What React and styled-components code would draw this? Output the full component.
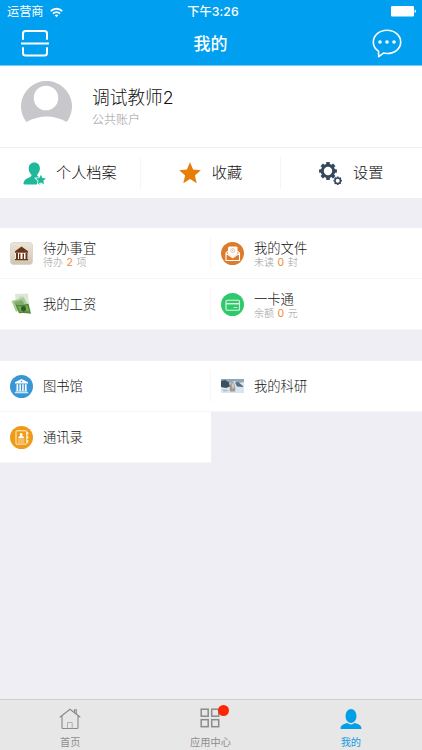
import React from 'react';
import styled, { createGlobalStyle } from 'styled-components';

const GlobalStyle = createGlobalStyle`
  * {
    box-sizing: border-box;
  }
  body {
    margin: 0;
    background: #eeeef4;
    font-family: Inter, "Noto Sans CJK SC", sans-serif;
    font-weight: 300;
    color: #111;
  }
`;

const Screen = styled.div`
  display: flex;
  flex-direction: column;
  width: 422px;
  height: 750px;
  overflow: hidden;
  background: #eeeef4;
`;
const Header = styled.header`
  height: 66px;
  background: #009fef;
  border-bottom: 1px solid #7ccaf5;
  color: #fff;
  font-weight: 400;
`;
const StatusBar = styled.div`
  display: grid;
  grid-template-columns: 1fr auto 1fr;
  align-items: center;
  height: 22px;
  padding: 0 6px 0 7px;
  font-size: 12.2px;
  line-height: 22px;
`;
const Carrier = styled.div`
  display: flex;
  align-items: center;
  gap: 6px;
  padding-top: 1px;
`;
const Time = styled.span`
  padding: 1px 0 0 3px;
  font-weight: 500;
  letter-spacing: 0.1px;
`;
const Battery = styled.svg`
  justify-self: end;
`;
const NavBar = styled.div`
  display: flex;
  align-items: center;
  justify-content: space-between;
  height: 42px;
  padding: 0 20px 0 21px;
`;
const Title = styled.h1`
  margin: 0;
  padding-top: 1px;
  font-size: 17px;
  line-height: 24px;
  font-weight: 500;
`;
const Profile = styled.section`
  display: flex;
  align-items: center;
  gap: 20px;
  height: 82px;
  padding: 0 21px 1px;
  background: #fff;
  border-bottom: 1px solid #f1f1f1;
`;
const Identity = styled.div`
  padding-top: 2px;
`;
const Name = styled.div`
  padding-top: 1px;
  font-size: 17.7px;
  line-height: 25px;
`;
const Account = styled.div`
  font-size: 12px;
  line-height: 20px;
  color: #999;
`;
const Actions = styled.nav`
  display: grid;
  grid-template-columns: repeat(3, 1fr);
  height: 50px;
  align-items: center;
  background: #fff;
`;
const Action = styled.div`
  display: flex;
  align-items: center;
  justify-content: center;
  gap: ${(p) => p.$gap}px;
  height: 32px;
  font-size: 15.2px;
  line-height: 22px;
  border-right: 1px solid ${(p) => (p.$last ? 'transparent' : '#f6f6f6')};
`;
const ActionLabel = styled.span`
  padding-bottom: 1px;
`;
const Grid = styled.section`
  display: grid;
  grid-template-columns: 211px 211px;
  grid-auto-rows: 51px;
  margin-top: 30px;
  & + & {
    margin-top: 31px;
  }
`;
const Cell = styled.div`
  display: flex;
  align-items: center;
  background: #fff;
  border-bottom: 1px solid #f6f6f7;
`;
const CellBody = styled.div`
  display: flex;
  flex: 1;
  align-items: center;
  gap: 10px;
  height: 32px;
  padding-left: 10px;
  ${Cell}:nth-child(even) & {
    margin-left: -1px;
    border-left: 1px solid #f8f6f6;
  }
`;
const CellText = styled.div`
  padding-top: ${(p) => (p.$note ? 2 : 0)}px;
`;
const CellTitle = styled.div`
  font-size: 13.3px;
  line-height: 16px;
`;
const Note = styled.div`
  font-size: 10px;
  line-height: 12px;
  color: #999;
`;
const Count = styled.span`
  margin: 0 3.5px;
  font-size: 10.5px;
  font-weight: 400;
  color: #ef8a35;
`;
const TabBar = styled.footer`
  display: grid;
  grid-template-columns: repeat(3, 1fr);
  height: 51px;
  margin-top: auto;
  padding-right: 1px;
  background: #e7e7e7;
  border-top: 1px solid #cfcfd2;
`;
const Tab = styled.div`
  display: flex;
  flex-direction: column;
  align-items: center;
  padding-top: 8px;
  font-size: 10.2px;
  font-weight: 400;
  line-height: 15px;
  color: ${(p) => (p.$active ? '#1699df' : '#8e8e8e')};
`;
const TabIcon = styled.div`
  position: relative;
  height: 27px;
`;
const Badge = styled.i`
  position: absolute;
  top: -3px;
  right: -9px;
  width: 11px;
  height: 11px;
  border-radius: 50%;
  background: #ff2606;
`;

const WifiIcon = () => (
  <svg width="13" height="11" viewBox="0 0 13 11" fill="none" stroke="#fff" strokeWidth="1.9">
    <path d="M.8 4.1a8.2 8.2 0 0 1 11.4 0" />
    <path d="M3 6.6a5.1 5.1 0 0 1 7 0" />
    <path d="M4.7 8.2a2.7 2.7 0 0 1 3.6 0L6.5 10.2z" fill="#fff" stroke="none" />
  </svg>
);

const ScanIcon = () => (
  <svg width="28" height="28" viewBox="0 0 28 28" fill="none" stroke="#fff" strokeWidth="2" strokeLinecap="round">
    <path d="M2 10V4.500Q2 2 4.500 2h19Q26 2 26 4.500V10M2 19v5Q2 26.500 4.500 26.500h19Q26 26.500 26 24V19" />
    <path d="M0 14.500h28" strokeLinecap="butt" />
  </svg>
);

const ChatIcon = () => (
  <svg width="30" height="30" viewBox="0 0 30 30" fill="none">
    <path
      d="M6.500 23.200C3.200 21 1.300 17.700 1.300 14 1.300 7.300 7.400 2.300 15 2.300s13.700 5 13.700 11.700S22.600 25.500 15 25.500c-1.200 0-2.400-.1-3.500-.4l-4.800 3.600z"
      stroke="#fff"
      strokeWidth="1.600"
      strokeLinejoin="round"
    />
    <g fill="#fff">
      <circle cx="8" cy="14" r="1.800" />
      <circle cx="15" cy="14" r="1.800" />
      <circle cx="22" cy="14" r="1.800" />
    </g>
  </svg>
);

const Avatar = () => (
  <svg width="51" height="51" viewBox="0 0 51 51">
    <path d="M5.300 41A25.500 25.500 0 1 1 45.700 41Q26 30 5.300 41z" fill="#c7c7cc" />
    <circle cx="25" cy="17" r="12.300" fill="#fff" />
  </svg>
);

const PersonStarIcon = () => (
  <svg width="23" height="23" viewBox="0 0 23 23" fill="#1fb89a">
    <path d="M11.300.5c3.400 0 5.600 2.400 5.600 5.800 0 2.200-.9 4.600-2.400 6-.5.700-.3 1.700.5 2.100l2 .9 2 5.600-2 1.500H1.800c-1.200 0-1.500-.7-1.200-2 .6-2.800 3.100-4.100 5.800-5 1.700-.6 2.700-1.700 1.700-3.100-1.500-1.400-2.400-3.600-2.400-5.900C5.700 2.900 7.900.5 11.300.5z" />
    <path
      d="M17.900 12.800l1.500 3.200 3.500.4-2.600 2.400.7 3.500-3.100-1.800-3.100 1.800.7-3.500-2.600-2.400 3.500-.4z"
      stroke="#fff"
      strokeWidth="1.600"
      paintOrder="stroke"
    />
  </svg>
);

const StarIcon = () => (
  <svg width="22" height="22" viewBox="0 0 22 22" fill="#e67e0a">
    <path d="M11 .3l3.100 7.300 7.700.7-5.900 5.100 1.800 7.800L11 17.100l-6.700 4.100 1.800-7.800L.2 8.300l7.700-.7z" />
  </svg>
);

const teeth = [0, 45, 90, 135, 180, 225, 270, 315];

const Gear = ({ x, y, scale }) => (
  <g transform={`translate(${x} ${y}) scale(${scale})`}>
    <circle r="5.700" fill="none" stroke="#34495e" strokeWidth="3" />
    {teeth.map((a) => (
      <rect key={a} x="-1.800" y="-8.900" width="3.600" height="3" rx=".5" fill="#34495e" transform={`rotate(${a})`} />
    ))}
  </g>
);

const GearsIcon = () => (
  <svg width="23" height="23" viewBox="0 0 23 23">
    <Gear x={9} y={9} scale={1} />
    <Gear x={18.7} y={18.7} scale={0.48} />
  </svg>
);

const HallIcon = () => (
  <svg width="23" height="23" viewBox="0 0 23 23">
    <defs>
      <linearGradient id="hall" x2="0" y2="1">
        <stop stopColor="#ebe5d9" />
        <stop offset="1" stopColor="#d0c5b1" />
      </linearGradient>
    </defs>
    <rect x=".4" y=".4" width="22.200" height="22.200" rx="3.500" fill="url(#hall)" stroke="#d8d0c1" strokeWidth=".8" />
    <path d="M5.500 10h12v8h-12z" fill="#fff" />
    <path d="M11.500 4.500L18 9.300v1.400H5V9.300zM6 11h2v6H6zM9 11.500h1.500V17H9zM12.500 11.500H14V17h-1.500zM15.500 11h2v6h-2zM5 17h13v1.300H5z" fill="#6b351b" />
  </svg>
);

const MoneyIcon = () => (
  <svg width="23" height="23" viewBox="0 0 23 23">
    <path d="M5 1l13-.5 1 10L6 11z" fill="#dce8d7" />
    <path d="M9 3.500h5v5H9z" fill="#c5d8bd" />
    <path d="M1.500 8L14 4.500l4 8L6 19z" fill="#a9cc95" />
    <path d="M4 9l8-2 3 5-8 3z" fill="#7fae6c" />
    <path d="M5.500 11.500q6 1.500 13-1L21 20.800q-7-1.500-12-.5z" fill="#538738" />
    <path d="M7.500 13q5 1 10-.6l1.600 6q-5-.5-9 .3z" fill="#79a857" />
    <ellipse cx="13.500" cy="15.800" rx="2.500" ry="2.700" fill="#315d24" />
  </svg>
);

const MailIcon = () => (
  <svg width="23" height="23" viewBox="0 0 23 23">
    <circle cx="11.500" cy="11.500" r="11.500" fill="#dc7b29" />
    <path d="M7 12V5.500L8 4.500h7.500l1 1V12l-5 3.500z" fill="#fff" />
    <circle cx="11.700" cy="8.500" r="2" fill="none" stroke="#e8a979" strokeWidth=".7" />
    <circle cx="11.700" cy="8.500" r=".7" fill="#e8a979" />
    <path d="M7 9.300L5 10.900v7.600h13.500v-7.600L16.500 9.300M5 11.200l6.700 4.700 6.800-4.700" fill="none" stroke="#fff" strokeWidth="1.100" />
  </svg>
);

const CardIcon = () => (
  <svg width="23" height="23" viewBox="0 0 23 23">
    <circle cx="11.500" cy="11.500" r="11.500" fill="#2fc96c" />
    <rect x="5" y="7.300" width="13.500" height="9.900" rx="1.300" fill="none" stroke="#d9f7e4" strokeWidth="1.100" />
    <path d="M5 10.700h13.500" stroke="#d9f7e4" strokeWidth="1.500" />
    <path d="M12.500 14.500h4" stroke="#d9f7e4" strokeWidth=".8" />
  </svg>
);

const LibraryIcon = () => (
  <svg width="23" height="23" viewBox="0 0 23 23">
    <circle cx="11.500" cy="11.500" r="11.500" fill="#3996d5" />
    <path
      d="M11.500 4L18 7.300v1.200H5V7.300zM6.500 9.300h1.700v6.400H6.500zM9.400 9.300h1.500v6.400H9.400zM12.200 9.300h1.500v6.400h-1.500zM14.900 9.300h1.700v6.400h-1.700zM5.700 15.700h11.600v.9H5.700zM4.800 17.200h13.400v1H4.800z"
      fill="#fff"
    />
    <circle cx="11.500" cy="6.500" r=".8" fill="#3996d5" />
  </svg>
);

const PhotoIcon = () => (
  <svg width="23" height="14" viewBox="0 0 23 14">
    <path d="M0 0h23v14H0z" fill="#dbe4ee" />
    <path d="M0 0h23v3L18 4l-5-2-4 2H0z" fill="#8fa7b8" />
    <path d="M0 2l4-1 4 2.500 1 4-4 1.500-5-1z" fill="#3c505b" />
    <path d="M14 3.500l3-.5 5 4v1l-6-.5z" fill="#546d80" />
    <path d="M9.500 4.500Q11.500 1.500 13 4l1.200 4v4.500H8.800V8z" fill="#9e9a8d" />
    <path d="M10.500 4.500l2-.5 1 4-2 2z" fill="#d0cabd" />
    <path d="M1 10.500l6 .5v1l-4 .5z" fill="#a9bac6" />
  </svg>
);

const ContactsIcon = () => (
  <svg width="23" height="23" viewBox="0 0 23 23">
    <circle cx="11.500" cy="11.500" r="11.500" fill="#ee9b18" />
    <rect x="6" y="4.800" width="10.700" height="13.300" rx=".6" fill="none" stroke="#ffefd2" strokeWidth="1" />
    <path d="M17 6h1.300v2.700H17zM17 10h1.300v2.700H17zM17 14h1.300v2.700H17z" fill="#ffefd2" />
    <circle cx="11.200" cy="8.400" r="1.500" fill="#fff" />
    <path d="M8 12.300q.2-1.900 2.200-2.200h2q2 .3 2.200 2.200z" fill="#fff" />
    <path d="M8 14h6.500M8 16h6.500" stroke="#ffefd2" strokeWidth=".8" />
  </svg>
);

const HomeIcon = () => (
  <svg width="22" height="22" viewBox="0 0 22 22" fill="none" stroke="#898989" strokeWidth="1.100">
    <path d="M.8 9.300L11 1.300l10.300 8M3 8v11.500q0 1 1 1h14q1 0 1-1V8M15.500 4.500V1.800h1.800V6" />
    <path d="M8.500 20.500v-6h4.700v6" stroke="#aaa" strokeWidth=".9" />
  </svg>
);

const AppsIcon = () => (
  <svg width="20" height="20" viewBox="0 0 20 20" fill="none" stroke="#8b8b8b" strokeWidth="1.500">
    <rect x="1.200" y="1.200" width="7" height="7" />
    <rect x="11.700" y="1.200" width="7" height="7" />
    <rect x="1.200" y="11.700" width="7" height="7" />
    <rect x="11.700" y="11.700" width="7" height="7" />
  </svg>
);

const UserIcon = () => (
  <svg width="22" height="22" viewBox="0 0 22 22" fill="#009fe8">
    <ellipse cx="11" cy="8" rx="5.500" ry="7" />
    <path d="M.6 21c-.4-3.400 2.400-4.900 6.500-6l1.500.8q2.400 1.200 4.800 0l1.500-.8c4.100 1.100 6.900 2.600 6.500 6z" />
  </svg>
);

const services = [
  { title: '待办事宜', icon: <HallIcon />, note: ['待办', 2, '项'] },
  { title: '我的文件', icon: <MailIcon />, note: ['未读', 0, '封'] },
  { title: '我的工资', icon: <MoneyIcon /> },
  { title: '一卡通', icon: <CardIcon />, note: ['余额', 0, '元'] },
];

const resources = [
  { title: '图书馆', icon: <LibraryIcon /> },
  { title: '我的科研', icon: <PhotoIcon /> },
  { title: '通讯录', icon: <ContactsIcon /> },
];

const CellGrid = ({ items }) => (
  <Grid>
    {items.map(({ title, icon, note }) => (
      <Cell key={title}>
        <CellBody>
          {icon}
          <CellText $note={!!note}>
            <CellTitle>{title}</CellTitle>
            {note && (
              <Note>
                {note[0]}
                <Count>{note[1]}</Count>
                {note[2]}
              </Note>
            )}
          </CellText>
        </CellBody>
      </Cell>
    ))}
  </Grid>
);

const App = () => {
  return (
    <Screen>
      <GlobalStyle />
      <Header>
        <StatusBar>
          <Carrier>
            运营商
            <WifiIcon />
          </Carrier>
          <Time>下午3:26</Time>
          <Battery width="25" height="11" viewBox="0 0 25 11" fill="#fff">
            <rect width="23" height="10.500" rx="1.200" />
            <path d="M23.600 3.500q1.400.3 1.400 1.800t-1.400 1.800z" />
          </Battery>
        </StatusBar>
        <NavBar>
          <ScanIcon />
          <Title>我的</Title>
          <ChatIcon />
        </NavBar>
      </Header>
      <Profile>
        <Avatar />
        <Identity>
          <Name>调试教师2</Name>
          <Account>公共账户</Account>
        </Identity>
      </Profile>
      <Actions>
        <Action $gap={10}>
          <PersonStarIcon />
          <ActionLabel>个人档案</ActionLabel>
        </Action>
        <Action $gap={11}>
          <StarIcon />
          <ActionLabel>收藏</ActionLabel>
        </Action>
        <Action $gap={11} $last>
          <GearsIcon />
          <ActionLabel>设置</ActionLabel>
        </Action>
      </Actions>
      <CellGrid items={services} />
      <CellGrid items={resources} />
      <TabBar>
        <Tab>
          <TabIcon>
            <HomeIcon />
          </TabIcon>
          首页
        </Tab>
        <Tab>
          <TabIcon>
            <AppsIcon />
            <Badge />
          </TabIcon>
          应用中心
        </Tab>
        <Tab $active>
          <TabIcon>
            <UserIcon />
          </TabIcon>
          我的
        </Tab>
      </TabBar>
    </Screen>
  );
};

export default App;
